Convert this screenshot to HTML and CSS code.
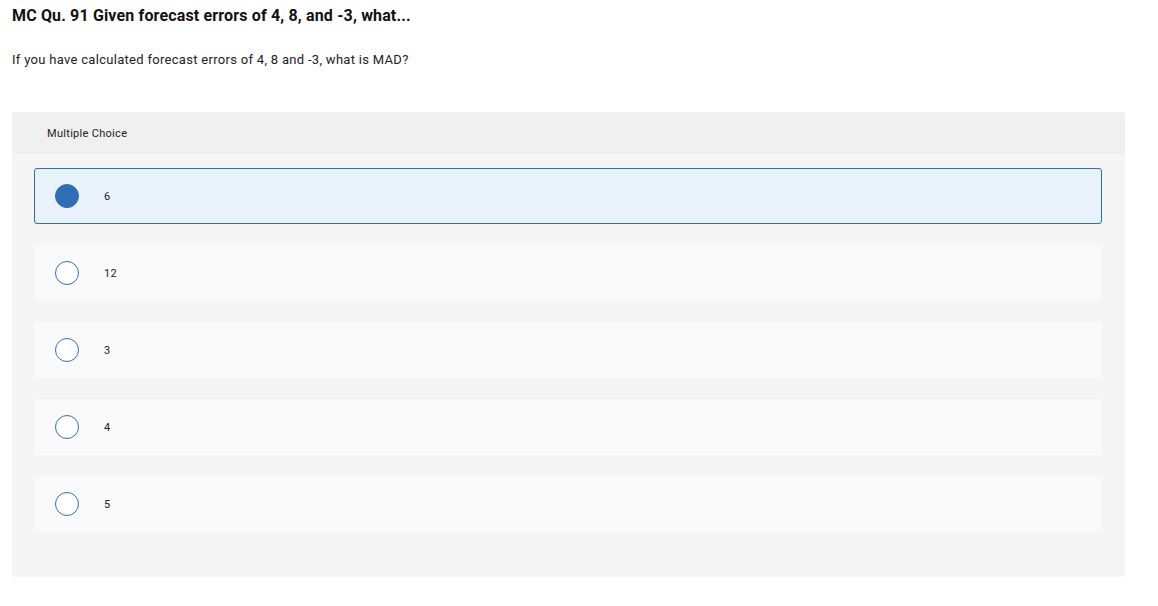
FILE: index.html
```html
<!DOCTYPE html>
<html lang="en">
<head>
    <meta charset="UTF-8">
    <meta name="viewport" content="width=device-width, initial-scale=1.0">
    <title>MC Qu. 91</title>
    <link rel="stylesheet" href="styles.css">
</head>
<body>
    <div class="question">
        <h2 class="question-title">MC Qu. 91 Given forecast errors of 4, 8, and -3, what...</h2>
        <p class="question-text">If you have calculated forecast errors of 4, 8 and -3, what is MAD?</p>

        <div class="choice-panel">
            <div class="choice-header">Multiple Choice</div>
            <div class="choice-list">
                <label class="choice selected">
                    <span class="radio"></span>
                    <span class="choice-label">6</span>
                </label>
                <label class="choice">
                    <span class="radio"></span>
                    <span class="choice-label">12</span>
                </label>
                <label class="choice">
                    <span class="radio"></span>
                    <span class="choice-label">3</span>
                </label>
                <label class="choice">
                    <span class="radio"></span>
                    <span class="choice-label">4</span>
                </label>
                <label class="choice">
                    <span class="radio"></span>
                    <span class="choice-label">5</span>
                </label>
            </div>
        </div>
    </div>
</body>
</html>
```

FILE: styles.css
```css
body{
    margin: 0;
    background-color: #fff;
    color: #1a1a1a;
    font-family: "Roboto", "Liberation Sans", sans-serif;
}
.question{
    padding: 6px 33px 0 12px;
}
.question-title{
    margin: 0;
    font-size: 16px;
    line-height: 20px;
    font-weight: 700;
    letter-spacing: 0.15px;
    color: #111;
}
.question-text{
    margin: 26px 0 0 0;
    font-size: 13px;
    line-height: 16px;
    letter-spacing: 0.3px;
    color: #222;
}
.choice-panel{
    margin-top: 44px;
    background-color: #f5f5f5;
    border-radius: 3px;
    overflow: hidden;
}
.choice-header{
    height: 42px;
    display: flex;
    align-items: center;
    padding-left: 35px;
    background-color: #f0f0f0;
    font-size: 11px;
    letter-spacing: 0.3px;
    color: #222;
}
.choice-list{
    display: flex;
    flex-direction: column;
    gap: 21px;
    padding: 14px 23px 45px 22px;
}
.choice{
    height: 56px;
    box-sizing: border-box;
    display: flex;
    align-items: center;
    padding-left: 20px;
    background-color: #fafafa;
    border: 1px solid transparent;
    border-radius: 3px;
}
.choice.selected{
    background-color: #e8f2fb;
    border-color: #2f6db5;
}
.radio{
    width: 24px;
    height: 24px;
    box-sizing: border-box;
    border: 1.5px solid #2f6db5;
    border-radius: 50%;
    background-color: #fff;
    flex-shrink: 0;
}
.selected .radio{
    background-color: #2f6db5;
}
.choice-label{
    margin-left: 25px;
    font-size: 11px;
    letter-spacing: 0.3px;
    color: #222;
}
```
